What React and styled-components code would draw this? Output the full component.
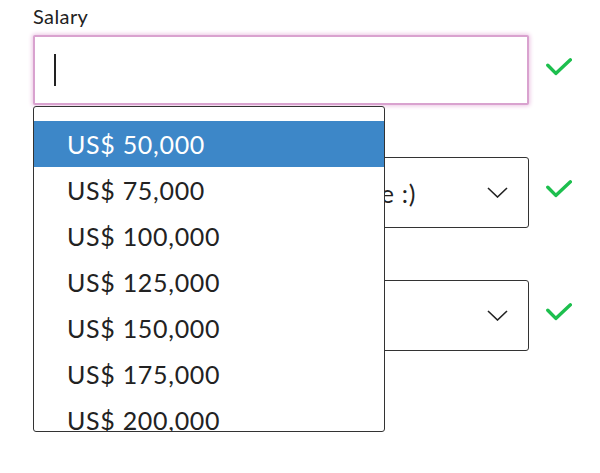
import styled, { createGlobalStyle } from "styled-components";

const GlobalStyle = createGlobalStyle`
  html, body {
    margin: 0;
    padding: 0;
    background: #ffffff;
  }
  body {
    font-family: "Lato", "Noto Sans", sans-serif;
    color: #222222;
  }
`;

const salaries = [
  "US$ 50,000",
  "US$ 75,000",
  "US$ 100,000",
  "US$ 125,000",
  "US$ 150,000",
  "US$ 175,000",
  "US$ 200,000",
];

function Check() {
  return (
    <CheckIcon viewBox="0 0 26 18" width="26" height="18">
      <polyline
        points="1.8,7.2 9.8,15.4 24.4,1.8"
        fill="none"
        stroke="#1dbf4e"
        strokeWidth="3.4"
        strokeLinecap="round"
        strokeLinejoin="round"
      />
    </CheckIcon>
  );
}

function Chevron() {
  return (
    <ChevronIcon viewBox="0 0 21 11" width="21" height="11">
      <polyline
        points="1,1 10.5,10 20,1"
        fill="none"
        stroke="#222"
        strokeWidth="1.6"
      />
    </ChevronIcon>
  );
}

export default function App() {
  return (
    <>
      <GlobalStyle />
      <Form>
        <Field>
          <Label>Salary</Label>
          <Row>
            <TextBox $focused>
              <Caret />
            </TextBox>
            <Check />
          </Row>
        </Field>

        <Field>
          <Label>Work type</Label>
          <Row>
            <Select>
              <SelectValue>Select the option you'd like :)</SelectValue>
              <Chevron />
            </Select>
            <Check />
          </Row>
        </Field>

        <Field>
          <Label>Location</Label>
          <Row>
            <Select>
              <SelectValue />
              <Chevron />
            </Select>
            <Check />
          </Row>
        </Field>

        <Listbox>
          {salaries.map((s, i) => (
            <Option key={s} $selected={i === 0}>
              {s}
            </Option>
          ))}
        </Listbox>
      </Form>
    </>
  );
}

const Form = styled.div`
  position: relative;
  width: 600px;
  height: 473px;
  box-sizing: border-box;
  padding: 5px 0 0 33px;
  overflow: hidden;
`;

const Field = styled.div`
  display: flex;
  flex-direction: column;
  margin-bottom: 22px;
`;

const Label = styled.div`
  font-size: 20px;
  line-height: 22px;
  letter-spacing: 0.4px;
  margin-bottom: 8px;
  color: #222;
`;

const Row = styled.div`
  display: flex;
  align-items: center;
  gap: 17px;
`;

const TextBox = styled.div`
  width: 496px;
  height: 70px;
  box-sizing: border-box;
  display: flex;
  align-items: center;
  padding-left: 19px;
  border: 2px solid ${(p) => (p.$focused ? "#d9a2cf" : "#333")};
  border-radius: 2px;
  box-shadow: ${(p) => (p.$focused ? "0 0 4px 1px #ebc4e3" : "none")};
  background: #fff;
`;

const Caret = styled.span`
  display: block;
  width: 1.5px;
  height: 32px;
  background: #222;
`;

const Select = styled.div`
  width: 496px;
  height: 71px;
  box-sizing: border-box;
  display: flex;
  align-items: center;
  justify-content: space-between;
  padding: 0 20px 0 46px;
  border: 1.5px solid #333;
  border-radius: 3px;
  background: #fff;
`;

const SelectValue = styled.span`
  font-size: 25px;
  letter-spacing: 0.7px;
  white-space: nowrap;
  color: #222;
`;

const ChevronIcon = styled.svg`
  display: block;
  flex-shrink: 0;
`;

const CheckIcon = styled.svg`
  display: block;
  flex-shrink: 0;
  margin-bottom: 7px;
`;

const Listbox = styled.ul`
  position: absolute;
  left: 33px;
  top: 106px;
  width: 352px;
  height: 326px;
  box-sizing: border-box;
  margin: 0;
  padding: 14px 0 0 0;
  list-style: none;
  background: #fff;
  border: 1.5px solid #333;
  border-radius: 3px;
  overflow: hidden;
`;

const Option = styled.li`
  height: 46px;
  display: flex;
  align-items: center;
  padding-left: 33px;
  font-size: 25px;
  letter-spacing: 0.7px;
  color: ${(p) => (p.$selected ? "#fff" : "#222")};
  background: ${(p) => (p.$selected ? "#3d87c8" : "transparent")};
`;
